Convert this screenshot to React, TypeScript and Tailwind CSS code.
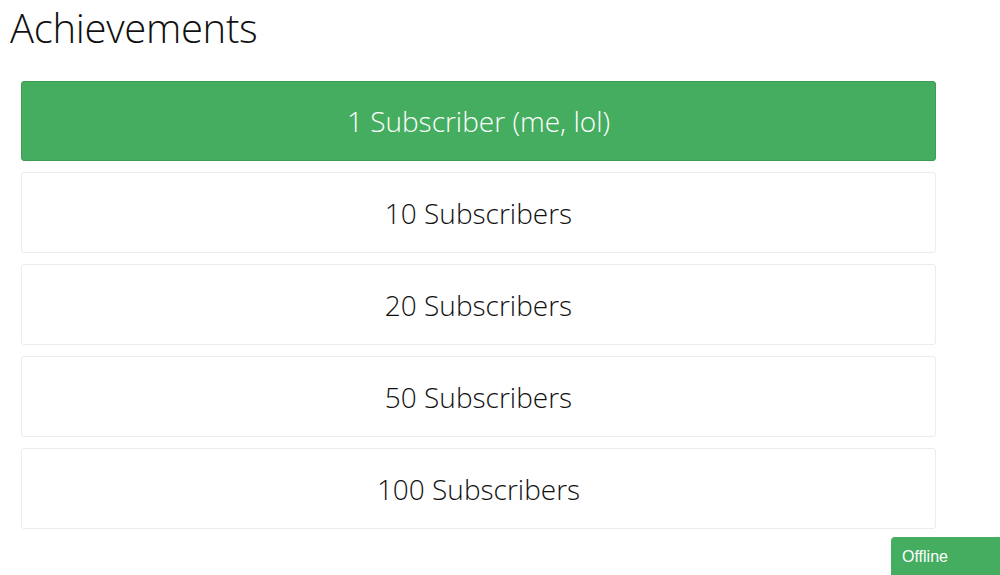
import React from "react";

const items = ["10 Subscribers", "20 Subscribers", "50 Subscribers", "100 Subscribers"];

export default function App() {
  return (
    <div className="relative w-[1000px] h-[575px] bg-white overflow-hidden" style={{ fontFamily: '"Open Sans", sans-serif' }}>
      <h1 className="pl-[10px] text-[40px] leading-[56px] font-light text-[#111] tracking-[-0.3px]">Achievements</h1>
      <div className="ml-[21px] mt-[25px] w-[915px] flex flex-col gap-[11px]">
        <div className="h-[80px] rounded-[3px] border border-[#3c9b55] bg-[#44ad5f] flex items-center justify-center text-[28px] font-light text-white">
          1 Subscriber (me, lol)
        </div>
        {items.map((t) => (
          <div key={t} className="h-[81px] rounded-[3px] border border-[#ececec] bg-white flex items-center justify-center text-[28px] font-light text-[#111]">
            {t}
          </div>
        ))}
      </div>
      <div
        className="absolute left-[891px] top-[537px] w-[109px] h-[38px] rounded-tl-[4px] bg-[#44ad5f] text-white text-[16px] pl-[11px] pt-[8px]"
        style={{ fontFamily: '"Liberation Sans", Arial, sans-serif' }}
      >
        Offline
      </div>
    </div>
  );
}
